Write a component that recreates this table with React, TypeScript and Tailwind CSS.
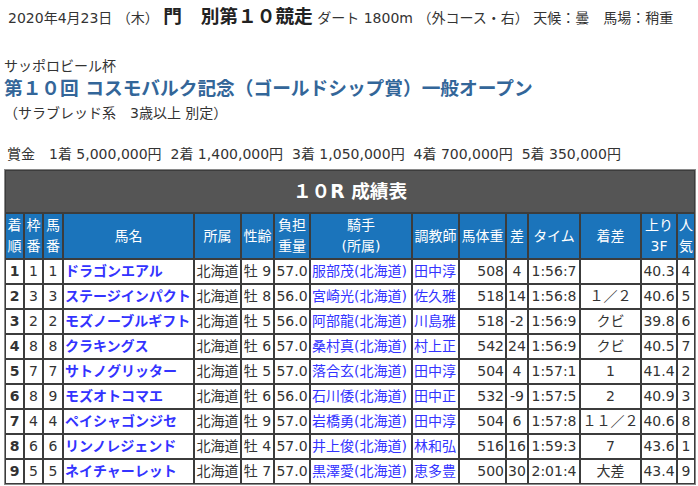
const font = { fontFamily: '"DejaVu Sans", "Noto Sans CJK JP", sans-serif' };

type Row = {
  rank: string;
  waku: string;
  uma: string;
  name: string;
  area: string;
  sexAge: string;
  weight: string;
  jockey: string;
  trainer: string;
  body: string;
  diff: string;
  time: string;
  margin: string;
  last3f: string;
  pop: string;
};

const rows: Row[] = [
  { rank: "1", waku: "1", uma: "1", name: "ドラゴンエアル", area: "北海道", sexAge: "牡 9", weight: "57.0", jockey: "服部茂(北海道)", trainer: "田中淳", body: "508", diff: "4", time: "1:56:7", margin: "", last3f: "40.3", pop: "4" },
  { rank: "2", waku: "3", uma: "3", name: "ステージインパクト", area: "北海道", sexAge: "牡 8", weight: "56.0", jockey: "宮崎光(北海道)", trainer: "佐久雅", body: "518", diff: "14", time: "1:56:8", margin: "１／２", last3f: "40.6", pop: "5" },
  { rank: "3", waku: "2", uma: "2", name: "モズノーブルギフト", area: "北海道", sexAge: "牡 5", weight: "56.0", jockey: "阿部龍(北海道)", trainer: "川島雅", body: "518", diff: "-2", time: "1:56:9", margin: "クビ", last3f: "39.8", pop: "6" },
  { rank: "4", waku: "8", uma: "8", name: "クラキングス", area: "北海道", sexAge: "牡 6", weight: "57.0", jockey: "桑村真(北海道)", trainer: "村上正", body: "542", diff: "24", time: "1:56:9", margin: "クビ", last3f: "40.5", pop: "7" },
  { rank: "5", waku: "7", uma: "7", name: "サトノグリッター", area: "北海道", sexAge: "牡 5", weight: "57.0", jockey: "落合玄(北海道)", trainer: "田中淳", body: "504", diff: "4", time: "1:57:1", margin: "1", last3f: "41.4", pop: "2" },
  { rank: "6", waku: "8", uma: "9", name: "モズオトコマエ", area: "北海道", sexAge: "牡 6", weight: "56.0", jockey: "石川倭(北海道)", trainer: "田中正", body: "532", diff: "-9", time: "1:57:5", margin: "2", last3f: "40.9", pop: "3" },
  { rank: "7", waku: "4", uma: "4", name: "ペイシャゴンジセ", area: "北海道", sexAge: "牡 9", weight: "57.0", jockey: "岩橋勇(北海道)", trainer: "田中淳", body: "504", diff: "6", time: "1:57:8", margin: "１１／２", last3f: "40.6", pop: "8" },
  { rank: "8", waku: "6", uma: "6", name: "リンノレジェンド", area: "北海道", sexAge: "牡 4", weight: "57.0", jockey: "井上俊(北海道)", trainer: "林和弘", body: "516", diff: "16", time: "1:59:3", margin: "7", last3f: "43.6", pop: "1" },
  { rank: "9", waku: "5", uma: "5", name: "ネイチャーレット", area: "北海道", sexAge: "牡 7", weight: "57.0", jockey: "黒澤愛(北海道)", trainer: "恵多豊", body: "500", diff: "30", time: "2:01:4", margin: "大差", last3f: "43.4", pop: "9" },
];

const widths = [19, 19, 20, 131, 47, 33, 36, 102, 47, 47, 22, 52, 61, 36, 18];

const th = "border border-[#3c3c3c] bg-[#1b74bb] px-px py-px text-center align-middle font-normal leading-[21px] text-white whitespace-nowrap";
const td = "border border-[#3c3c3c] bg-white px-px py-px leading-[21px] whitespace-nowrap overflow-hidden";

export default function App() {
  return (
    <div className="min-h-[486px] bg-white px-1 text-[14px] text-[#333]" style={font}>
      <div className="ml-1 pt-[6px] leading-[22px] whitespace-nowrap">
        <span>2020年4月23日 （木） </span>
        <span className="text-[18.7px] font-bold text-[#222]">門　別第１０競走</span>
        <span> ダート 1800m （外コース・右） 天候：曇　馬場：稍重</span>
      </div>

      <div className="mt-[27px] leading-[20px]">サッポロビール杯</div>
      <h1 className="mt-px text-[18.7px] font-bold leading-[24px] text-[#336699]">
        第１０回 コスモバルク記念（ゴールドシップ賞）一般オープン
      </h1>
      <div className="mt-[2px] leading-[20px]">（サラブレッド系　3歳以上 別定）</div>

      <div className="mt-[21px] ml-[3px] leading-[20px] whitespace-nowrap">
        賞金　1着 5,000,000円&nbsp; 2着 1,400,000円&nbsp; 3着 1,050,000円&nbsp; 4着 700,000円&nbsp; 5着 350,000円
      </div>

      <table className="mt-[5px] w-[692px] table-fixed border-separate border-spacing-0 border border-[#8a8a8a]">
        <colgroup>
          {widths.map((w, i) => (
            <col key={i} style={{ width: w }} />
          ))}
        </colgroup>
        <thead>
          <tr>
            <th colSpan={15} className="border border-[#3c3c3c] bg-[#555555] py-[9px] text-center text-[18.7px] font-bold leading-[23px] text-white">
              １０R 成績表
            </th>
          </tr>
          <tr>
            <th className={th}>着<br />順</th>
            <th className={th}>枠<br />番</th>
            <th className={th}>馬<br />番</th>
            <th className={th}>馬名</th>
            <th className={th}>所属</th>
            <th className={th}>性齢</th>
            <th className={th}>負担<br />重量</th>
            <th className={th}>騎手<br />(所属)</th>
            <th className={th}>調教師</th>
            <th className={th}>馬体重</th>
            <th className={th}>差</th>
            <th className={th}>タイム</th>
            <th className={th}>着差</th>
            <th className={th}>上り<br />3F</th>
            <th className={th}>人<br />気</th>
          </tr>
        </thead>
        <tbody>
          {rows.map((r) => (
            <tr key={r.rank}>
              <td className={`${td} text-center font-bold`}>{r.rank}</td>
              <td className={`${td} text-center`}>{r.waku}</td>
              <td className={`${td} text-center`}>{r.uma}</td>
              <td className={`${td} text-left font-bold text-[#3333ff]`}>{r.name}</td>
              <td className={`${td} text-center`}>{r.area}</td>
              <td className={`${td} text-center`}>{r.sexAge}</td>
              <td className={`${td} text-center`}>{r.weight}</td>
              <td className={`${td} text-left text-[#3333ff]`}>{r.jockey}</td>
              <td className={`${td} text-left text-[#3333ff]`}>{r.trainer}</td>
              <td className={`${td} text-right`}>{r.body}</td>
              <td className={`${td} text-center`}>{r.diff}</td>
              <td className={`${td} text-center`}>{r.time}</td>
              <td className={`${td} text-center`}>{r.margin}</td>
              <td className={`${td} text-center`}>{r.last3f}</td>
              <td className={`${td} text-center`}>{r.pop}</td>
            </tr>
          ))}
        </tbody>
      </table>
    </div>
  );
}
